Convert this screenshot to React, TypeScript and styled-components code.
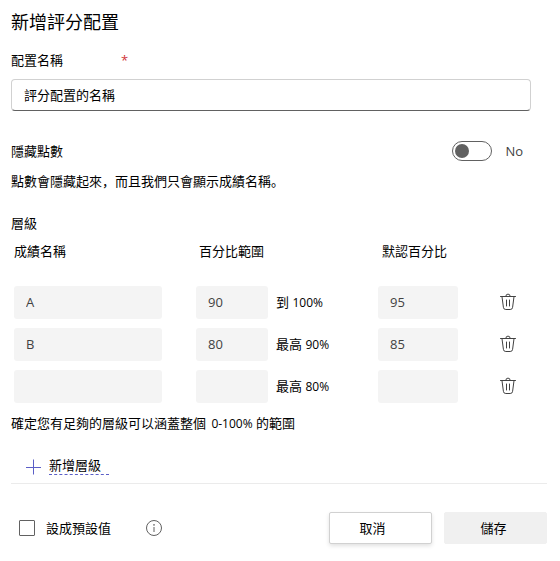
import React, { useState } from "react";
import styled, { createGlobalStyle } from "styled-components";

const GlobalStyle = createGlobalStyle`
  *, *::before, *::after { box-sizing: border-box; }
  body {
    margin: 0;
    background: #fff;
    color: #000;
    font: 13px/20px "Open Sans", "Noto Sans CJK SC", sans-serif;
  }
  button, input { font: inherit; color: inherit; }
`;

const Dialog = styled.main`
  padding: 8px 13px 16px 11px;
`;

const Title = styled.h1`
  margin: 0 0 14px;
  font-size: 18px;
  line-height: 28px;
  font-weight: 400;
`;

const Section = styled.section`
  padding-right: 16px;
`;

const FieldLabel = styled.label`
  display: flex;
  gap: 58px;
`;

const Required = styled.span`
  color: #d13438;
`;

const NameInput = styled.input`
  display: block;
  width: 100%;
  height: 32px;
  margin-top: 9px;
  padding: 0 12px;
  border: 1px solid #d1d1d1;
  border-bottom-color: #616161;
  border-radius: 4px;
  background: #fff;
  &::placeholder { color: #000; opacity: 1; }
`;

const SwitchRow = styled.div`
  display: flex;
  align-items: center;
  justify-content: space-between;
  margin-top: 30px;
`;

const SwitchControl = styled.label`
  display: flex;
  align-items: center;
  gap: 13px;
  padding-right: 8px;
  color: #424242;
`;

const Switch = styled.input`
  appearance: none;
  display: flex;
  align-items: center;
  width: 40px;
  height: 20px;
  margin: 0;
  padding: 0 2px;
  border: 1px solid #616161;
  border-radius: 10px;
  &::before {
    content: "";
    width: 14px;
    height: 14px;
    border-radius: 50%;
    background: #616161;
  }
  &:checked { justify-content: flex-end; }
`;

const Description = styled.p`
  margin: 10px 0 0;
`;

const LevelsTitle = styled.h2`
  margin: 22px 0 0;
  font-size: 13px;
  line-height: 20px;
  font-weight: 400;
`;

const LevelsTable = styled.table`
  width: 100%;
  margin-top: 8px;
  padding-left: 3px;
  table-layout: fixed;
  border-spacing: 0;
`;

const HeadCell = styled.th<{ $width?: number; $indent?: number }>`
  width: ${(p) => (p.$width ? `${p.$width}px` : "auto")};
  padding: 0 0 20px ${(p) => p.$indent ?? 0}px;
  font-weight: 400;
  line-height: 20px;
  text-align: left;
`;

const Cell = styled.td<{ $end?: number }>`
  height: 42px;
  padding: 0 ${(p) => p.$end ?? 0}px 0 0;
`;

const RangeField = styled.div`
  display: flex;
  align-items: center;
  gap: 8px;
`;

const LevelInput = styled.input<{ $width?: number }>`
  display: block;
  width: ${(p) => (p.$width ? `${p.$width}px` : "100%")};
  height: 33px;
  padding: 0 12px;
  border: 0;
  border-radius: 3px;
  background: #f4f4f4;
  color: #424242;
`;

const IconButton = styled.button`
  display: flex;
  padding: 0;
  border: 0;
  background: none;
  color: #424242;
`;

const Note = styled.p`
  margin: 6px 0 0;
`;

const Percent = styled.span`
  font-size: 12px;
`;

const NotePercent = styled(Percent)`
  margin-left: 2px;
`;

const AddButton = styled.button`
  display: flex;
  align-items: flex-end;
  gap: 8px;
  margin: 22px 0 0 14px;
  padding: 0;
  border: 0;
  background: none;
`;

const AddText = styled.span`
  padding-right: 8px;
  border-bottom: 1px dashed #5b5fc7;
  line-height: 18px;
`;

const Footer = styled.footer`
  display: flex;
  align-items: center;
  margin-top: 8px;
  padding-top: 28px;
  border-top: 1px solid #ebebeb;
`;

const DefaultLabel = styled.label`
  display: flex;
  align-items: center;
  gap: 11px;
  margin-left: 8px;
`;

const Checkbox = styled.input`
  appearance: none;
  width: 16px;
  height: 16px;
  margin: 0;
  border: 1px solid #616161;
  border-radius: 1px;
  &:checked { background: #5b5fc7; }
`;

const InfoButton = styled(IconButton)`
  margin-left: 35px;
`;

const Actions = styled.div`
  display: flex;
  gap: 12px;
  margin-left: auto;
`;

const ActionButton = styled.button<{ $quiet?: boolean }>`
  width: 103px;
  height: 32px;
  padding: 0 ${(p) => (p.$quiet ? 4 : 16)}px 0 0;
  border: 1px solid ${(p) => (p.$quiet ? "#f0f0f0" : "#d1d1d1")};
  border-radius: 2px;
  background: ${(p) => (p.$quiet ? "#f0f0f0" : "#fff")};
  box-shadow: ${(p) => (p.$quiet ? "none" : "0 2px 4px rgba(0, 0, 0, 0.12)")};
`;

const TrashIcon = () => (
  <svg width="16" height="18" viewBox="0 0 16 18" fill="none" stroke="currentColor" strokeLinecap="round" strokeLinejoin="round">
    <path d="M.5 3.5h15M5.8 3.3a2.2 2.2 0 0 1 4.4 0M2 3.7l1.4 10.6a2.4 2.4 0 0 0 2.4 2.2h4.4a2.4 2.4 0 0 0 2.4-2.2L14 3.7M6.5 7v6M9.5 7v6" />
  </svg>
);

const PlusIcon = () => (
  <svg width="16" height="16" viewBox="0 0 16 16" fill="none" stroke="#5b5fc7">
    <path d="M8.5 .5v15M1 8.5h15" />
  </svg>
);

const InfoIcon = () => (
  <svg width="16" height="16" viewBox="0 0 16 16" fill="none" stroke="#616161">
    <circle cx="8" cy="8" r="7.5" />
    <path d="M8 7v5" />
    <circle cx="8" cy="4.9" r=".8" fill="#616161" stroke="none" />
  </svg>
);

const levels = [
  { name: "A", from: "90", word: "到", to: "100%", preset: "95" },
  { name: "B", from: "80", word: "最高", to: "90%", preset: "85" },
  { name: "", from: "", word: "最高", to: "80%", preset: "" },
];

export default function App() {
  const [hidden, setHidden] = useState(false);
  return (
    <Dialog>
      <GlobalStyle />
      <Title>新增評分配置</Title>
      <Section>
        <FieldLabel htmlFor="scheme-name">
          配置名稱 <Required>*</Required>
        </FieldLabel>
        <NameInput id="scheme-name" placeholder="評分配置的名稱" required />
        <SwitchRow>
          <span id="hide-points">隱藏點數</span>
          <SwitchControl>
            <Switch
              type="checkbox"
              role="switch"
              aria-labelledby="hide-points"
              checked={hidden}
              onChange={(e) => setHidden(e.target.checked)}
            />
            {hidden ? "Yes" : "No"}
          </SwitchControl>
        </SwitchRow>
        <Description>點數會隱藏起來，而且我們只會顯示成績名稱。</Description>
      </Section>
      <LevelsTitle>層級</LevelsTitle>
      <LevelsTable>
        <thead>
          <tr>
            <HeadCell>成績名稱</HeadCell>
            <HeadCell $width={182} $indent={3}>百分比範圍</HeadCell>
            <HeadCell $width={122} $indent={4}>默認百分比</HeadCell>
            <HeadCell $width={47} />
          </tr>
        </thead>
        <tbody>
          {levels.map((level, i) => (
            <tr key={i}>
              <Cell $end={34}>
                <LevelInput aria-label="成績名稱" defaultValue={level.name} />
              </Cell>
              <Cell>
                <RangeField>
                  <LevelInput $width={72} aria-label="百分比範圍" defaultValue={level.from} />
                  <span>
                    {level.word} <Percent>{level.to}</Percent>
                  </span>
                </RangeField>
              </Cell>
              <Cell>
                <LevelInput $width={80} aria-label="默認百分比" defaultValue={level.preset} />
              </Cell>
              <Cell>
                <IconButton type="button" aria-label="刪除">
                  <TrashIcon />
                </IconButton>
              </Cell>
            </tr>
          ))}
        </tbody>
      </LevelsTable>
      <Note>
        確定您有足夠的層級可以涵蓋整個 <NotePercent>0-100%</NotePercent> 的範圍
      </Note>
      <AddButton type="button">
        <PlusIcon />
        <AddText>新增層級</AddText>
      </AddButton>
      <Footer>
        <DefaultLabel>
          <Checkbox type="checkbox" />
          設成預設值
        </DefaultLabel>
        <InfoButton type="button" aria-label="設成預設值">
          <InfoIcon />
        </InfoButton>
        <Actions>
          <ActionButton type="button">取消</ActionButton>
          <ActionButton type="button" $quiet>儲存</ActionButton>
        </Actions>
      </Footer>
    </Dialog>
  );
}
